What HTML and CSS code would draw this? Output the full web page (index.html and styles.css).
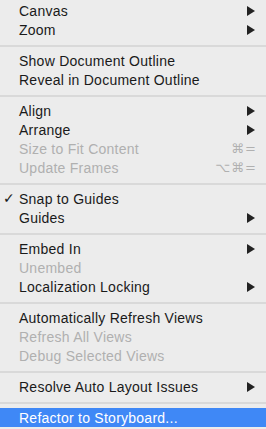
FILE: index.html
```html
<!DOCTYPE html>
<html lang="en">
<head>
    <meta charset="UTF-8">
    <title>Editor Menu</title>
    <link rel="stylesheet" href="styles.css">
</head>
<body>

<ul class="menu">
    <li class="item"><span class="label">Canvas</span><span class="submenu"></span></li>
    <li class="item"><span class="label">Zoom</span><span class="submenu"></span></li>
    <li class="separator"></li>
    <li class="item"><span class="label">Show Document Outline</span></li>
    <li class="item"><span class="label">Reveal in Document Outline</span></li>
    <li class="separator"></li>
    <li class="item"><span class="label">Align</span><span class="submenu"></span></li>
    <li class="item"><span class="label">Arrange</span><span class="submenu"></span></li>
    <li class="item disabled"><span class="label">Size to Fit Content</span><span class="shortcut">⌘=</span></li>
    <li class="item disabled"><span class="label">Update Frames</span><span class="shortcut">⌥⌘=</span></li>
    <li class="separator"></li>
    <li class="item"><span class="check">✓</span><span class="label">Snap to Guides</span></li>
    <li class="item"><span class="label">Guides</span><span class="submenu"></span></li>
    <li class="separator"></li>
    <li class="item"><span class="label">Embed In</span><span class="submenu"></span></li>
    <li class="item disabled"><span class="label">Unembed</span></li>
    <li class="item"><span class="label">Localization Locking</span><span class="submenu"></span></li>
    <li class="separator"></li>
    <li class="item"><span class="label">Automatically Refresh Views</span></li>
    <li class="item disabled"><span class="label">Refresh All Views</span></li>
    <li class="item disabled"><span class="label">Debug Selected Views</span></li>
    <li class="separator"></li>
    <li class="item"><span class="label">Resolve Auto Layout Issues</span><span class="submenu"></span></li>
    <li class="separator"></li>
    <li class="item selected"><span class="label">Refactor to Storyboard...</span></li>
</ul>

</body>
</html>
```

FILE: styles.css
```css
:root {
    --menu-bg: #ececec;
    --text-color: #1a1a1a;
    --disabled-color: #b0b0b0;
    --separator-color: #d9d9d9;
    --highlight: #3f88f6;
    --font-sans: 'Liberation Sans', Arial, sans-serif;
}

* { margin: 0; padding: 0; box-sizing: border-box; }

body {
    background: var(--menu-bg);
    font-family: var(--font-sans);
    font-size: 14px;
    color: var(--text-color);
    width: 266px;
    height: 429px;
    overflow: hidden;
}

/* --- Menu --- */
.menu {
    list-style: none;
    padding-top: 1px;
}

.item {
    position: relative;
    height: 19px;
    display: flex;
    align-items: center;
    padding: 0 11px 0 19px;
    letter-spacing: 0.25px;
    white-space: nowrap;
}
.item .label {
    flex: 1;
}

.item.disabled {
    color: var(--disabled-color);
}

.item.selected {
    background: var(--highlight);
    color: #fff;
}

.check {
    position: absolute;
    left: 3px;
    top: 0;
    font-family: 'DejaVu Sans', sans-serif;
    font-size: 14px;
    font-weight: bold;
    line-height: 19px;
}

.submenu {
    width: 0;
    height: 0;
    border-left: 8px solid #222;
    border-top: 5px solid transparent;
    border-bottom: 5px solid transparent;
}

.shortcut {
    font-family: 'DejaVu Sans', sans-serif;
    font-size: 13px;
    letter-spacing: 1px;
    margin-right: -2px;
}

.separator {
    height: 12px;
    padding: 6px 0 4px;
}
.separator::before {
    content: '';
    display: block;
    height: 2px;
    background: var(--separator-color);
}
```
